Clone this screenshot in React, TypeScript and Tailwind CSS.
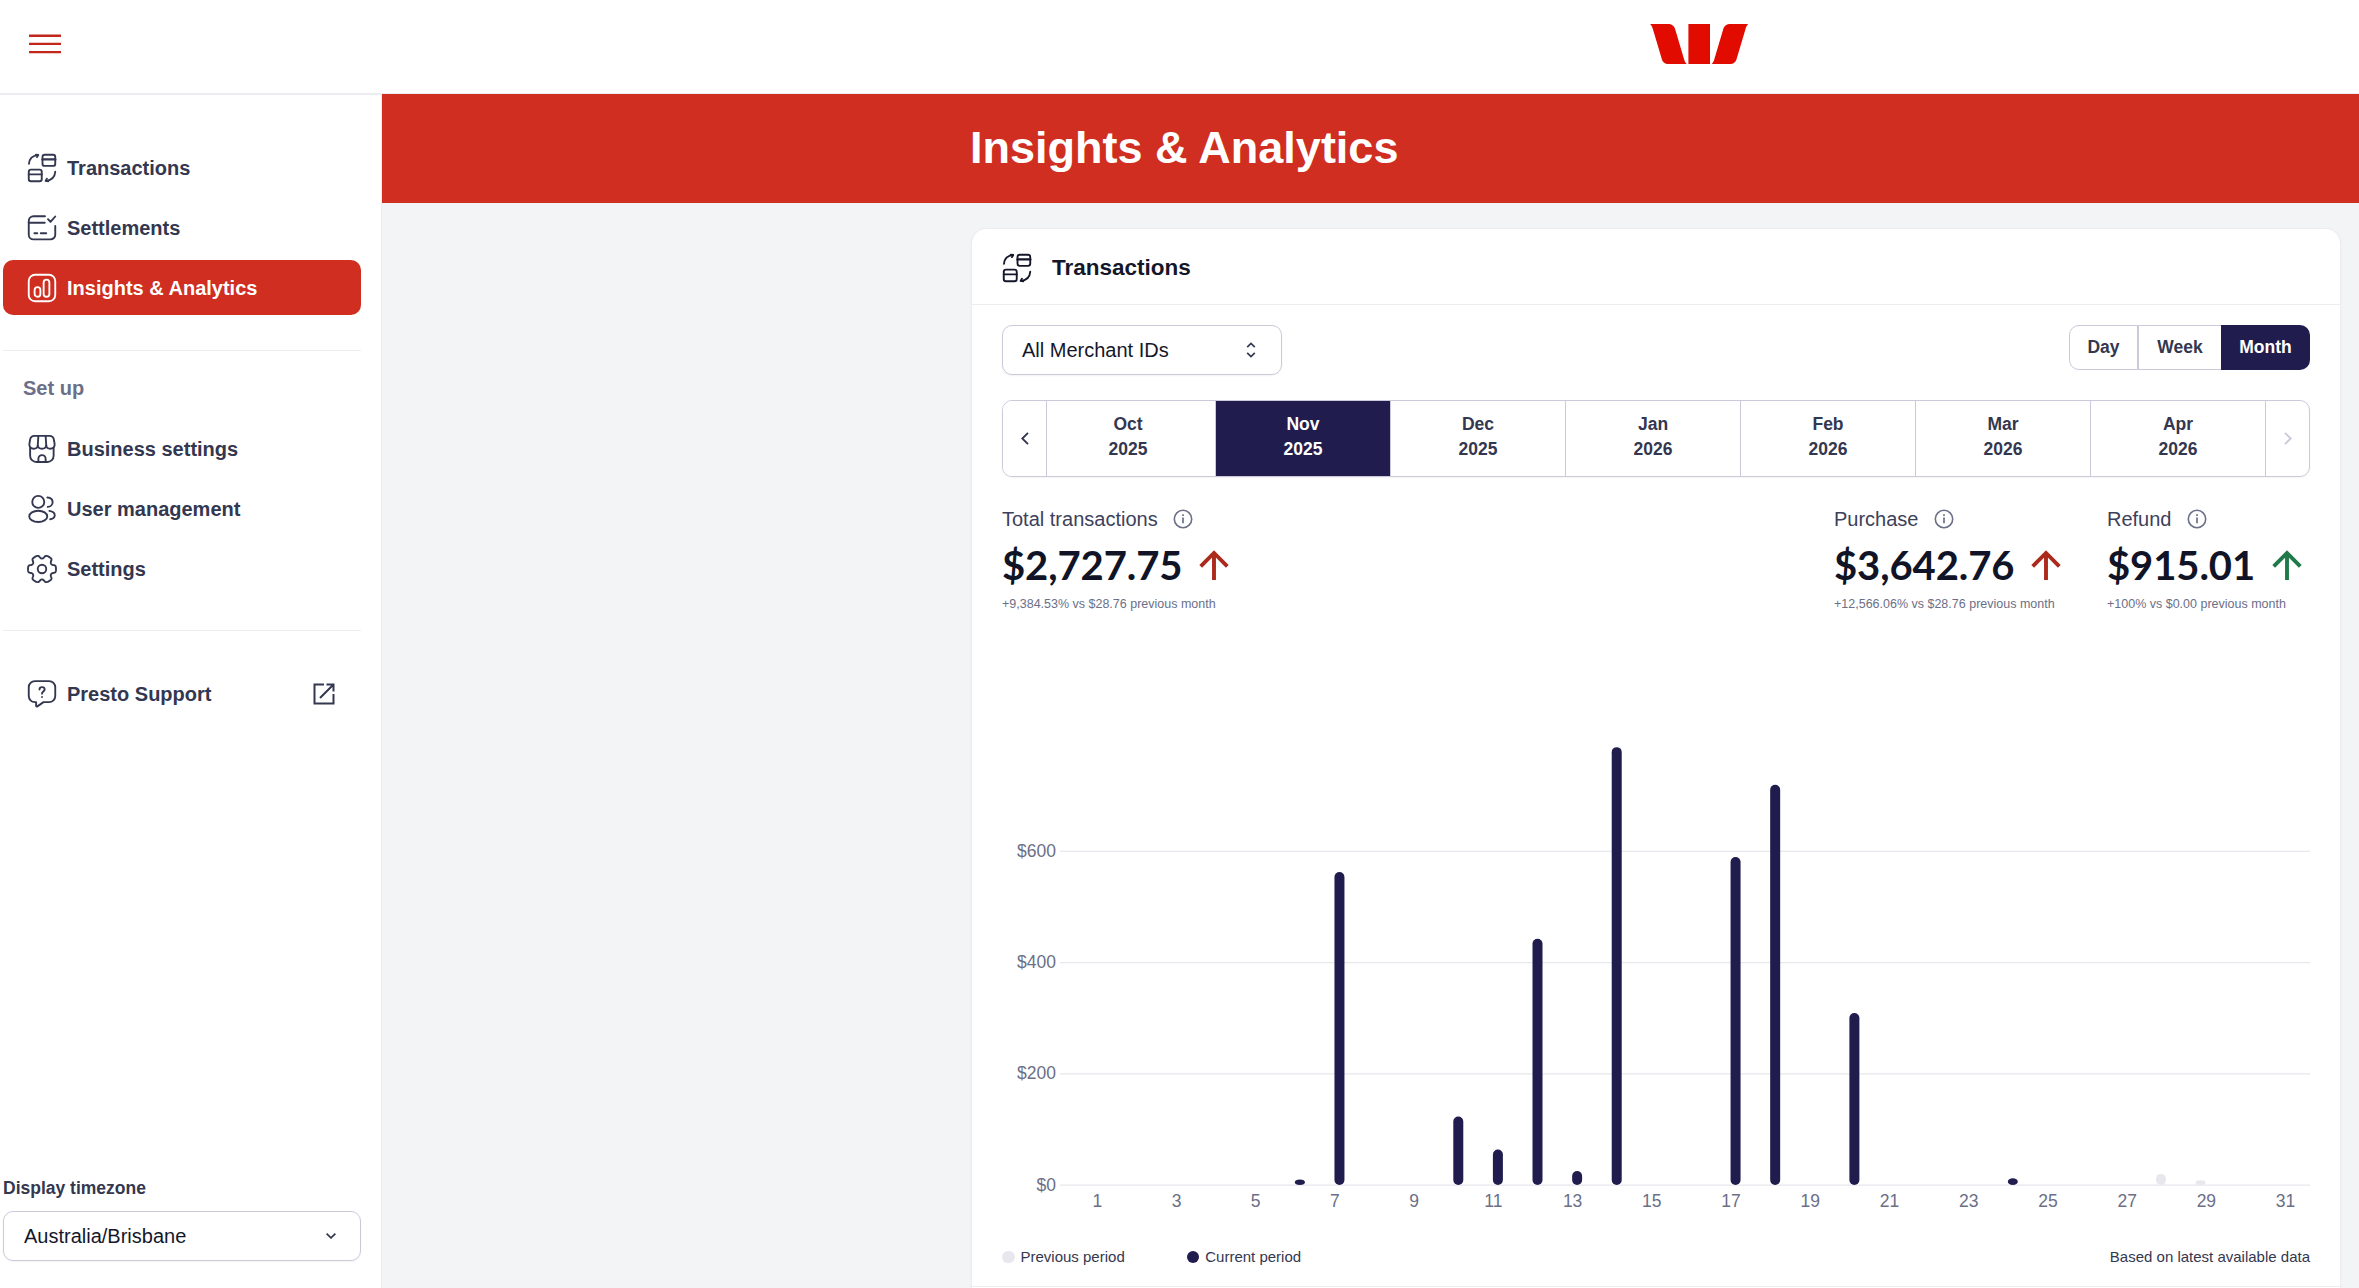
import type { ReactNode } from "react";
import clsx from "clsx";

type IconProps = { className?: string };

function Icon({ className = "size-[30px]", children }: IconProps & { children: ReactNode }) {
    return (
        <svg
            viewBox="0 0 24 24"
            fill="none"
            stroke="currentColor"
            strokeWidth={1.5}
            strokeLinecap="round"
            strokeLinejoin="round"
            className={clsx("shrink-0", className)}
        >
            {children}
        </svg>
    );
}

function TransactionsIcon() {
    return (
        <Icon>
            <rect x="12.4" y="1.4" width="10.2" height="8.9" rx="1.8" />
            <path d="M12.4 5.1h10.2" strokeWidth={1.9} />
            <rect x="1.4" y="13.3" width="10.4" height="9.3" rx="1.8" />
            <path d="M1.4 17.1h10.4" />
            <path d="M1.6 8.6C1.9 4.6 4.4 2.1 8.6 1.7" />
            <path d="M7.1 1.3 9 1.6 8 3.3" />
            <path d="M22.6 15c-.3 4-2.9 6.7-7.2 7.3" />
            <path d="m15.9 20.5-1 1.8 2.1.3" />
        </Icon>
    );
}

function SettlementsIcon() {
    return (
        <Icon>
            <path d="M14.4 2.6H5.2a3.8 3.8 0 0 0-3.8 3.8v10.9a3.8 3.8 0 0 0 3.8 3.8h13.6a3.8 3.8 0 0 0 3.8-3.8v-7" />
            <path d="M1.4 7.8h12.8" />
            <path d="M5.9 16.2h2.3M11 16.2h4.4" />
            <path d="m16.8 4.9 2 2.2 3.8-4.3" />
        </Icon>
    );
}

function InsightsIcon() {
    return (
        <Icon>
            <rect x="1.4" y="1.4" width="21.2" height="21.2" rx="5" />
            <rect x="6.1" y="11.3" width="4.6" height="7.7" rx="2.3" />
            <rect x="13.3" y="5.3" width="4.6" height="13.7" rx="2.3" />
        </Icon>
    );
}

function BusinessIcon() {
    return (
        <Icon>
            <path d="M2.5 11v6.4a5 5 0 0 0 5 5h8.800a5 5 0 0 0 5-5V11" />
            <path d="M9.1 1.5 8.6 9c-.1 1.7-1.400 2.800-3.200 2.800C3.100 11.800 1.600 10.300 1.900 8l.6-3.500c.3-2 1.700-3 3.500-3h12c1.800 0 3.200 1 3.500 3l.6 3.500c.3 2.300-1.200 3.800-3.500 3.800-1.800 0-3.100-1.100-3.200-2.800l-.5-7.500" />
            <path d="M8.600 9c.2 1.700 1.500 2.800 3.400 2.800s3.200-1.100 3.400-2.800" />
            <path d="M9.100 22.300v-2.500a2.900 2.900 0 0 1 5.800 0v2.500" />
        </Icon>
    );
}

function UsersIcon() {
    return (
        <Icon>
            <circle cx="9" cy="6.3" r="4.8" />
            <ellipse cx="9" cy="17.9" rx="7.2" ry="4.5" />
            <path d="M16.3 2.8c2.500.2 4.200 1.600 4.200 3.700s-1.700 3.700-3.900 3.800" />
            <path d="M17.9 13.5c2.500.4 4.300 1.700 4.300 3.500 0 1.700-1.400 2.800-3.600 3.200" />
        </Icon>
    );
}

// Six-toothed gear outline sampled in polar coordinates
const GEAR_POINTS = Array.from({ length: 180 }, (_, i) => {
    const angle = (i / 180) * Math.PI * 2;
    const radius = 9.7 + 1.5 * Math.tanh(2.2 * Math.cos(6 * angle) + 0.9);
    return `${(12 + radius * Math.cos(angle)).toFixed(2)},${(12 + radius * Math.sin(angle)).toFixed(2)}`;
}).join(" ");

function SettingsIcon() {
    return (
        <Icon>
            <circle cx="12" cy="12" r="3.4" />
            <polygon points={GEAR_POINTS} />
        </Icon>
    );
}

function SupportIcon() {
    return (
        <Icon>
            <path d="M6.300 1.700h11.400a4.900 4.900 0 0 1 4.900 4.900v7a4.900 4.900 0 0 1-4.900 4.900h-4.500l-4.900 3.400c-.5.300-1 .1-1-.5v-2.900h-1a4.900 4.900 0 0 1-4.900-4.900v-7a4.900 4.900 0 0 1 4.900-4.900Z" />
            <path d="M10 8.400c0-1.200.9-1.900 2-1.900s2.100.8 2.100 1.900c0 1.600-2.100 1.700-2.100 3.300" />
            <path d="M12 14.300v.1" />
        </Icon>
    );
}

function ExternalIcon() {
    return (
        <svg viewBox="0 0 22 22" fill="none" stroke="currentColor" strokeWidth="2" className="size-[22px]">
            <path d="M11 1.500H1.500v19h19V11" />
            <path d="M13.500 1.500h7v7M20.500 1.500 7 15" />
        </svg>
    );
}

function InfoIcon() {
    return (
        <svg viewBox="0 0 20 20" fill="none" stroke="currentColor" strokeWidth="1.6" className="size-5 text-[#6b6f87]">
            <circle cx="10" cy="10" r="8.7" />
            <path d="M10 8.600v5.600M10 5.300v1.800" strokeWidth="1.700" />
        </svg>
    );
}

function ArrowUp({ className }: IconProps) {
    return (
        <svg viewBox="0 0 30 30" fill="none" stroke="currentColor" strokeWidth="3.9" className={clsx("size-[30px]", className)}>
            <path d="M15 30V3M1.700 16.400 15 3l13.300 13.400" />
        </svg>
    );
}

function Logo() {
    return (
        <svg viewBox="0 0 98.4 40" fill="#e10b00" className="h-10 w-[98.400px]">
            <path d="M0 0h17.500c4.500 0 6.800 2 7.900 5.900L34 35c.7 2.500 1.500 4 2.900 5H19c-4.500 0-6.500-2-7.500-6L3 5.500C2.300 3 1.500 1.200 0 0Z" />
            <path d="M38.400 0H60v40H38.400z" />
            <path d="M98.400 0H80.900c-4.500 0-6.800 2-7.900 5.900L64.400 35c-.7 2.500-1.500 4-2.900 5h17.900c4.500 0 6.500-2 7.500-6l8.500-28.500c.7-2.500 1.500-4.300 3-5.500Z" />
        </svg>
    );
}

const MAIN_NAV = [
    { label: "Transactions", icon: <TransactionsIcon /> },
    { label: "Settlements", icon: <SettlementsIcon /> },
    { label: "Insights & Analytics", icon: <InsightsIcon />, active: true },
];

const SETUP_NAV = [
    { label: "Business settings", icon: <BusinessIcon /> },
    { label: "User management", icon: <UsersIcon /> },
    { label: "Settings", icon: <SettingsIcon /> },
];

function NavItem({
    label,
    icon,
    active,
    trailing,
}: {
    label: string;
    icon: ReactNode;
    active?: boolean;
    trailing?: ReactNode;
}) {
    return (
        <a
            href="#"
            className={clsx(
                "flex h-[55px] items-center rounded-[10px] pl-6 pr-[26px] text-xl font-bold",
                active ? "bg-[#cf2e20] text-white" : "text-[#33374f]",
            )}
        >
            {icon}
            <span className="ml-2.5">{label}</span>
            {trailing && <span className="ml-auto">{trailing}</span>}
        </a>
    );
}

function Sidebar() {
    return (
        <aside className="flex w-[382px] shrink-0 flex-col border-r border-t border-[#ececf1] bg-white pb-[27px] pl-[3px] pr-5">
            <nav className="mt-[45px] flex flex-col gap-[5px]">
                {MAIN_NAV.map((item) => (
                    <NavItem key={item.label} {...item} />
                ))}
            </nav>
            <hr className="mt-[35px] border-[#ececf1]" />
            <h2 className="mt-[22px] pl-5 text-xl font-bold leading-[30px] text-[#6b6f87]">Set up</h2>
            <nav className="mt-[18px] flex flex-col gap-[5px]">
                {SETUP_NAV.map((item) => (
                    <NavItem key={item.label} {...item} />
                ))}
            </nav>
            <hr className="mt-[34px] border-[#ececf1]" />
            <nav className="mt-[35px]">
                <NavItem label="Presto Support" icon={<SupportIcon />} trailing={<ExternalIcon />} />
            </nav>
            <div className="mt-auto">
                <label className="block text-[17.5px] font-bold leading-[25px] text-[#33374f]">
                    Display timezone
                </label>
                <button className="mt-2.5 flex h-[50px] w-full items-center justify-between rounded-[10px] border border-[#cbc9da] pl-5 pr-6 text-xl text-[#14172a] shadow-xs">
                    Australia/Brisbane
                    <svg viewBox="0 0 10 6" fill="none" stroke="#33374f" strokeWidth="1.700" className="h-1.5 w-2.5">
                        <path d="m.6.700 4.400 4.200L9.400.700" />
                    </svg>
                </button>
            </div>
        </aside>
    );
}

const RANGES = [
    { label: "Day", className: "w-[69px] rounded-l-[10px] border border-[#cbc9da]" },
    { label: "Week", className: "w-[83px] border-y border-l border-[#cbc9da]" },
    { label: "Month", className: "w-[89px] rounded-r-[10px] bg-[#211c4e] text-white" },
];

const MONTHS = [
    ["Oct", "2025"],
    ["Nov", "2025"],
    ["Dec", "2025"],
    ["Jan", "2026"],
    ["Feb", "2026"],
    ["Mar", "2026"],
    ["Apr", "2026"],
];

function MonthPicker() {
    return (
        <div className="mt-[25px] flex h-[77px] overflow-hidden rounded-[10px] border border-[#cbc9da] text-[17.5px] font-bold leading-[25px] text-[#33374f] shadow-xs">
            <button className="z-10 flex w-11 shrink-0 items-center justify-center border-r border-[#cbc9da] bg-white">
                <svg viewBox="0 0 8 13" fill="none" stroke="currentColor" strokeWidth="1.900" className="h-[13px] w-2">
                    <path d="M7 .8 1.300 6.500 7 12.200" />
                </svg>
            </button>
            <div className="-ml-[6px] flex flex-1">
                {MONTHS.map(([month, year]) => {
                    const selected = month === "Nov";
                    return (
                        <button
                            key={month}
                            className={clsx(
                                "flex flex-1 flex-col items-center justify-center border-r border-[#cbc9da] pb-[3px]",
                                selected && "bg-[#211c4e] text-white",
                            )}
                        >
                            <span>{month}</span>
                            <span>{year}</span>
                        </button>
                    );
                })}
            </div>
            <button className="flex w-[43px] shrink-0 items-center justify-center text-[#cbc9da]">
                <svg viewBox="0 0 8 13" fill="none" stroke="currentColor" strokeWidth="1.900" className="h-[13px] w-2">
                    <path d="m1 .8 5.700 5.700L1 12.200" />
                </svg>
            </button>
        </div>
    );
}

function Stat({
    label,
    value,
    change,
    className,
    arrowClassName = "text-[#ab2a1c]",
}: {
    label: string;
    value: string;
    change: string;
    className?: string;
    arrowClassName?: string;
}) {
    return (
        <div className={className}>
            <div className="flex h-[30px] items-center gap-[15px] text-xl text-[#3d415a]">
                {label}
                <InfoIcon />
            </div>
            <div className="flex h-[60px] items-center gap-[17px] pt-0.5 font-['Lato',sans-serif] text-[40px] font-bold tracking-[-0.1px] text-[#101426]">
                {value}
                <ArrowUp className={arrowClassName} />
            </div>
            <div className="text-[12.5px] leading-5 text-[#6b6f87]">{change}</div>
        </div>
    );
}

const CURRENT: Record<number, number> = {
    6: 10,
    7: 563,
    10: 123,
    11: 64,
    12: 443,
    13: 25,
    14: 787.5,
    17: 590,
    18: 720,
    20: 309.5,
    24: 12,
};

const PREVIOUS: Record<number, number> = { 28: 20, 29: 8.76 };

const BASELINE = 465;
const DAY_STEP = 39.61;

const dayX = (day: number) => 95 + (day - 1) * DAY_STEP;
const barHeight = (value: number) => (value / 200) * 111.2;

function Bars({ data, offset, fill }: { data: Record<number, number>; offset: number; fill: string }) {
    return (
        <g fill={fill}>
            {Object.entries(data).map(([day, value]) => {
                const height = barHeight(value);
                return (
                    <rect
                        key={day}
                        x={dayX(Number(day)) + offset - 5}
                        y={BASELINE - height}
                        width={10}
                        height={height}
                        rx={5}
                        ry={Math.min(5, height / 2)}
                    />
                );
            })}
        </g>
    );
}

function Chart() {
    return (
        <svg viewBox="0 0 1308 500" className="mt-[105px] h-[500px] w-full text-[17.5px]">
            {[0, 200, 400, 600].map((amount) => {
                const y = BASELINE - barHeight(amount);
                return (
                    <g key={amount}>
                        <line x1="58" x2="1308" y1={y} y2={y} stroke="#e7e7ed" strokeWidth="1.250" />
                        <text x="54" y={y + 5.5} textAnchor="end" fill="#6b6f87">
                            ${amount}
                        </text>
                    </g>
                );
            })}
            <Bars data={PREVIOUS} offset={-5.5} fill="#e7e7ed" />
            <Bars data={CURRENT} offset={4.8} fill="#211c4e" />
            {Array.from({ length: 16 }, (_, i) => i * 2 + 1).map((day) => (
                <text key={day} x={dayX(day) + 0.3} y={487} textAnchor="middle" fill="#6b6f87">
                    {day}
                </text>
            ))}
        </svg>
    );
}

function TransactionsCard() {
    return (
        <section className="ml-[589px] mt-[25px] h-[1200px] w-[1370px] rounded-[15px] border border-[#ececf1] bg-white text-[#14172a] shadow-xs">
            <header className="flex h-[76px] items-center gap-5 border-b border-[#ececf1] pl-[30px] pt-[3px] text-[22.5px] font-bold">
                <TransactionsIcon />
                Transactions
            </header>
            <div className="px-[30px] pt-5">
                <div className="flex items-start justify-between">
                    <button className="flex h-[50px] w-[280px] items-center justify-between rounded-[10px] border border-[#cbc9da] pl-[19px] pr-[25px] text-xl shadow-xs">
                        All Merchant IDs
                        <svg viewBox="0 0 10 16" fill="none" stroke="#33374f" strokeWidth="1.700" className="h-4 w-2.5">
                            <path d="m1.200 5.200 3.800-3.700 3.800 3.700M1.200 10.800 5 14.500l3.800-3.700" />
                        </svg>
                    </button>
                    <div className="flex text-[17.5px] font-bold text-[#33374f]">
                        {RANGES.map(({ label, className }) => (
                            <button key={label} className={clsx("h-[45px]", className)}>
                                {label}
                            </button>
                        ))}
                    </div>
                </div>
                <MonthPicker />
                <div className="mt-[27px] flex h-[111px]">
                    <Stat label="Total transactions" value="$2,727.75" change="+9,384.53% vs $28.76 previous month" />
                    <Stat
                        className="ml-auto w-[273px]"
                        label="Purchase"
                        value="$3,642.76"
                        change="+12,566.06% vs $28.76 previous month"
                    />
                    <Stat
                        className="w-[203px]"
                        label="Refund"
                        value="$915.01"
                        change="+100% vs $0.00 previous month"
                        arrowClassName="text-[#1f7a4a]"
                    />
                </div>
                <Chart />
                <footer className="mt-[25px] flex h-6 items-center text-[15px] text-[#33374f]">
                    <span className="mr-1.5 size-[12.5px] rounded-full bg-[#e7e7ed]" />
                    Previous period
                    <span className="ml-[62px] mr-1.5 size-[12.5px] rounded-full bg-[#211c4e]" />
                    Current period
                    <span className="ml-auto">Based on latest available data</span>
                </footer>
            </div>
            <hr className="mt-[17px] border-[#ececf1]" />
        </section>
    );
}

export default function App() {
    return (
        <div className="flex h-[1288px] w-[2359px] flex-col overflow-hidden bg-[#f3f4f6] font-['Liberation_Sans',Arial,sans-serif]">
            <header className="flex h-[94px] shrink-0 items-start border-b border-[#ececf1] bg-white">
                <button className="ml-[29px] mt-[34px] w-8">
                    <svg viewBox="0 0 32 20" stroke="#c1281b" strokeWidth="2.400" className="h-5 w-8">
                        <path d="M0 1.700h32M0 9.900h32M0 18.100h32" />
                    </svg>
                </button>
                <div className="ml-[1588.500px] mt-6">
                    <Logo />
                </div>
            </header>
            <div className="flex min-h-0 flex-1">
                <Sidebar />
                <main className="h-full min-w-0 flex-1 overflow-hidden">
                    <div className="flex h-[109px] items-center bg-[#cf2e20] pb-[3px] pl-[588px]">
                        <h1 className="text-[45px] font-bold leading-none text-white">Insights & Analytics</h1>
                    </div>
                    <TransactionsCard />
                </main>
            </div>
        </div>
    );
}
